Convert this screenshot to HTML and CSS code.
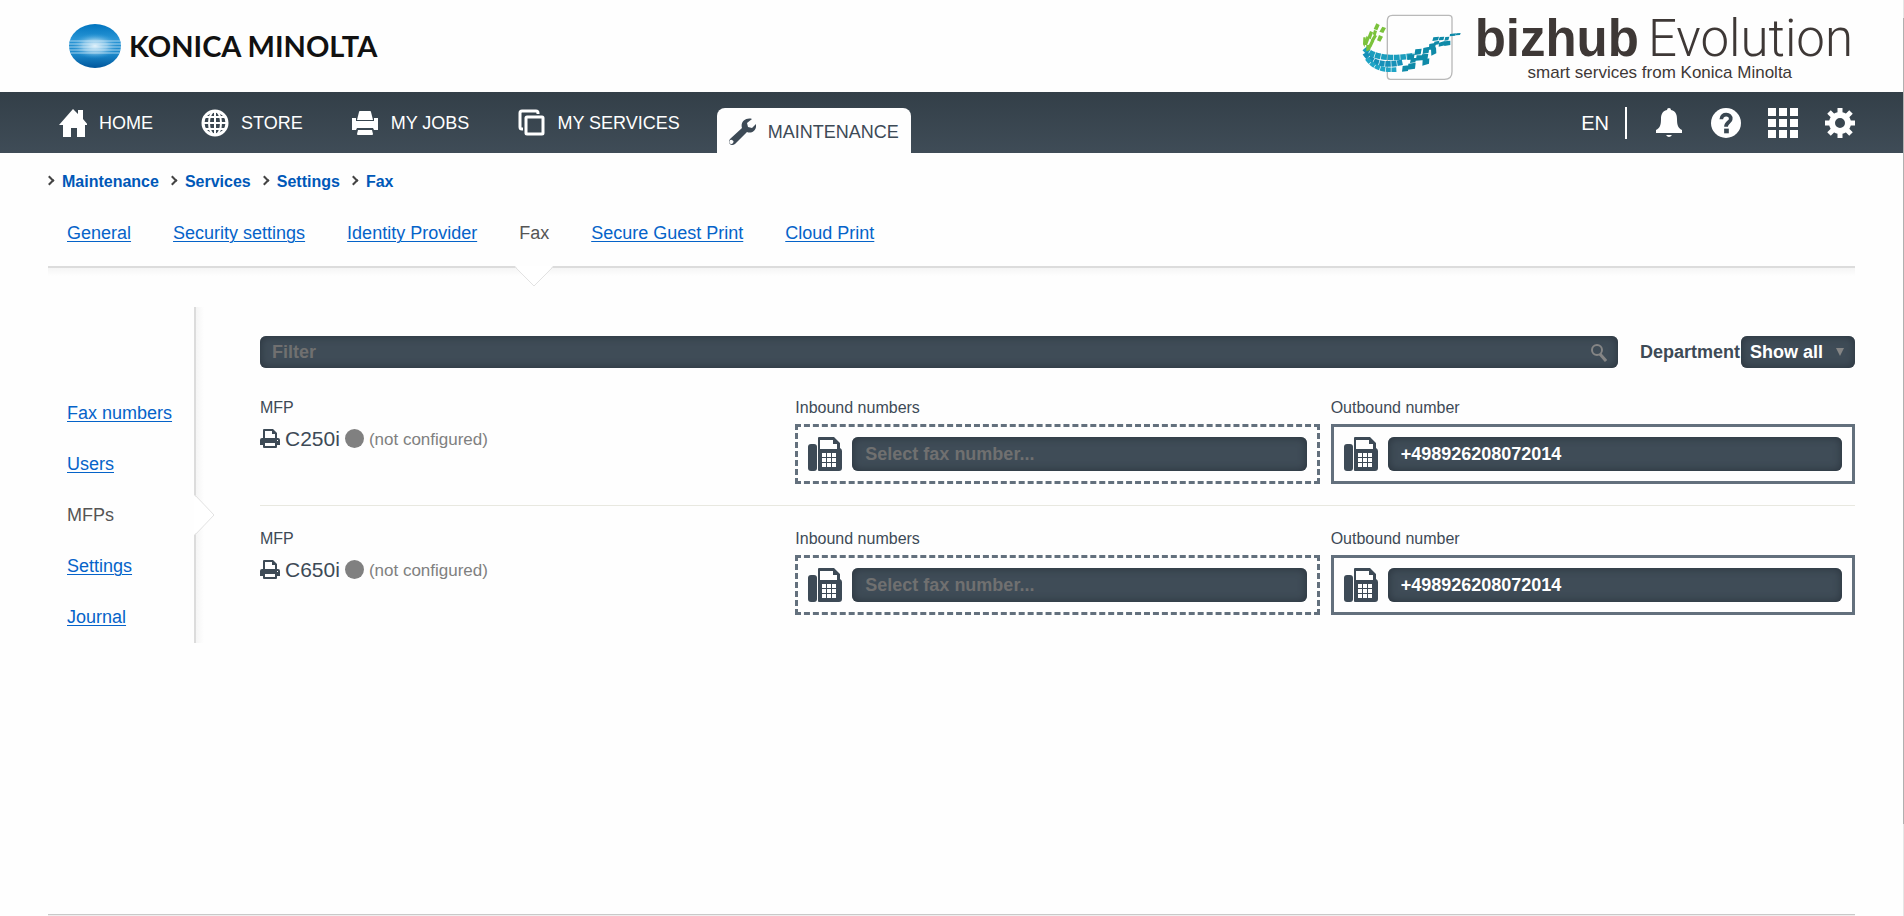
FILE: index.html
```html
<!DOCTYPE html>
<html lang="en">
<head>
<meta charset="utf-8">
<title>Fax - MFPs</title>
<link rel="stylesheet" href="styles.css">
</head>
<body>
<svg class="defs" aria-hidden="true">
  <defs>
    <symbol id="i-fax" viewBox="0 0 34 34">
      <rect x="0" y="7" width="9" height="27" rx="3"/>
      <path fill-rule="evenodd" d="M10 1q0-1 1-1h15l6 6v5q2 1 2 3v17q0 3-3 3H11q-1 0-1-1zM12 3v9h17V7h-4V3z"/>
      <g class="cut"><path d="M14 16h4v4h-4zM19 16h4v4h-4zM24 16h4v4h-4zM14 21h4v4h-4zM19 21h4v4h-4zM24 21h4v4h-4zM14 26h4v4h-4zM19 26h4v4h-4zM24 26h4v4h-4z"/></g>
    </symbol>
    <symbol id="i-mfp" viewBox="0 0 20 20">
      <path fill-rule="evenodd" d="M3 1q0-1 1-1h9l4 4v5h1q2 0 2 2v5h-3v2q0 1-1 1H4q-1 0-1-1v-2H0v-5q0-2 2-2h1zM5 2v7h10V5h-3V2zM5 14v3h10v-3zM17 11v1h1v-1z"/>
    </symbol>
    <symbol id="i-printer" viewBox="0 0 28 28">
      <path d="M9 2h10q1 0 1 1l2 8H6l2-8q0-1 1-1z"/>
      <path d="M1 9h4v3h18V9h4v12h-4l-1-2H6l-1 2H1z"/>
      <path d="M7 21h14l1 4q0 1-1 1H7q-1 0-1-1z"/>
    </symbol>
  </defs>
</svg>

<header class="brand-bar">
  <a class="brand" href="#" aria-label="Konica Minolta">
    <svg class="globe" viewBox="0 0 52 44" aria-hidden="true">
      <defs>
        <linearGradient id="gb" x1="0" y1="0" x2="0" y2="1"><stop offset="0" stop-color="#0074bf"/><stop offset=".35" stop-color="#2a96d6"/><stop offset=".7" stop-color="#1a86c8"/><stop offset="1" stop-color="#00569c"/></linearGradient>
        <radialGradient id="gg"><stop offset="0" stop-color="#e6f4fc"/><stop offset=".5" stop-color="#a5d4ef" stop-opacity=".7"/><stop offset="1" stop-color="#2a96d6" stop-opacity="0"/></radialGradient>
      </defs>
      <ellipse cx="26" cy="22" rx="26" ry="22" fill="url(#gb)"/>
      <ellipse cx="26" cy="22" rx="24" ry="13" fill="url(#gg)"/>
      <path d="M1 17h50M0 20h52M0 23h52M0 26h52M2 29h48" stroke="#d8eefa" stroke-opacity=".7"/>
    </svg>
    <span class="brand-name">KONICA MINOLTA</span>
  </a>
  <a class="product" href="#" aria-label="bizhub Evolution">
    <svg class="swirl" viewBox="0 0 330 240" aria-hidden="true">
      <path d="M118 31H288Q297 31 297 40V200Q297 223 274 223H112Q103 223 103 214V48Q103 31 118 31Z" fill="none" stroke="#b9b9b9" stroke-width="4"/>
      <g fill="none">
        <path d="M35 130C60 160 120 162 182 152" stroke="#1b9dbd" stroke-width="17" stroke-dasharray="17 2"/>
        <path d="M36 144C58 178 100 182 148 172" stroke="#1690b8" stroke-width="17" stroke-dasharray="16 2"/>
        <path d="M42 160C64 190 90 196 130 194" stroke="#20a5c6" stroke-width="14" stroke-dasharray="15 2"/>
      </g>
      <g fill="#0f8aa8">
        <path d="M166 149l19-2-3 16-19 2zM187 133l19-2-3 17-19 2zM191 151l18-1-3 16-18 1zM207 148l19-2-3 18-19 2zM211 129l18-4-2 18-18 4zM229 117l20-4-3 18-19 4zM234 133l15-6 1 18-15 7zM209 166l20-6-1 16-20 6zM174 160l16-2-3 14-16 2zM166 176l22-3-2 18-22 3zM149 183l18-2-2 17-18 2z"/>
        <path d="M241 97l17-2-3 11-17 2zM260 96l14-1-3 10-14 1zM277 96l12-1-3 11-12 1zM244 110l15-3-2 11-15 3zM258 113l17-5 1 13-19 4zM275 109l17-2 0 13-18 3zM291 87l18-2-2 7-17 2zM310 85l13-1-2 6-13 1z"/>
      </g>
      <g fill="#7bc23c">
        <path d="M70 55l10 5-7 16-11-4zM88 65l11 4-8 15-12-4zM63 75l9 3-4 14-9-4zM51 78l9 4-7 21-10-5zM78 90l12 5-8 15-10-4zM64 88l8 5-10 17-9-4zM41 92l8 10-7 19-10-2zM55 104l9 4-9 19-9-4zM40 121l18-4-7 18-11 4zM31 97l7 0-3 30-5-9z"/>
      </g>
    </svg>
    <span class="product-text">
      <span class="product-name"><b>bizhub</b><span class="product-light">Evolution</span></span>
      <span class="product-tag">smart services from Konica Minolta</span>
    </span>
  </a>
</header>

<nav class="main-nav" aria-label="Main">
  <a class="nav-item" href="#">
    <svg viewBox="0 0 28 28" aria-hidden="true"><path d="M14 0l5 5V1h5v9l5 6h-3v12h-8v-9h-6v9H4V16H0z"/></svg>HOME</a>
  <a class="nav-item" href="#">
    <svg viewBox="0 0 28 28" aria-hidden="true"><g fill="none" stroke="#fff" stroke-width="2"><circle cx="14" cy="14" r="12" stroke-width="3"/><ellipse cx="14" cy="14" rx="6" ry="12"/><path d="M14 2v24M2 14h24M4 8h20M4 20h20"/></g></svg>STORE</a>
  <a class="nav-item" href="#"><svg aria-hidden="true"><use href="#i-printer"/></svg>MY JOBS</a>
  <a class="nav-item" href="#">
    <svg viewBox="0 0 28 28" aria-hidden="true"><g fill="none" stroke="#fff" stroke-width="3"><path d="M6 20H5q-2 0-2-2V4q0-2 2-2h14q2 0 2 2v1"/><rect x="9" y="8" width="17" height="17" rx="1"/></g></svg>MY SERVICES</a>
  <a class="nav-item active" href="#" aria-current="page">
    <svg viewBox="0 0 28 28" aria-hidden="true"><path fill-rule="evenodd" d="M24 1L19 5l1 4 4 1 4-4c1 6-4 10-9 8L7 26c-4 3-8-1-5-5L14 10C12 4 18-1 24 1zM4 22a2 2 0 1 0 1 3 2 2 0 0 0-1-3z"/></svg>MAINTENANCE</a>
  <div class="tools">
    <button class="lang" type="button">EN</button>
    <button class="tool" type="button" aria-label="Notifications"><svg viewBox="0 0 30 30"><path d="M15 0q2 0 2 2c5 1 6 5 6 9 0 6 1 9 5 11v3H2v-3c4-2 5-5 5-11 0-4 1-8 6-9q0-2 2-2zM12 27h6q-3 4-6 0z"/></svg></button>
    <button class="tool" type="button" aria-label="Help"><svg viewBox="0 0 32 32"><circle cx="16" cy="16" r="16"/><path d="M11 12c0-7 11-6 10 0 0 3-5 3-5 8" fill="none" stroke="#3a4751" stroke-width="4"/><path d="M14 22h5v5h-5z" fill="#3a4751"/></svg></button>
    <button class="tool" type="button" aria-label="Applications"><svg viewBox="0 0 30 30"><path d="M0 0h8v8H0zM11 0h8v8h-8zM22 0h8v8h-8zM0 11h8v8H0zM11 11h8v8h-8zM22 11h8v8h-8zM0 22h8v8H0zM11 22h8v8h-8zM22 22h8v8h-8z"/></svg></button>
    <button class="tool" type="button" aria-label="Settings"><svg viewBox="0 0 30 30"><g fill="none" stroke="#fff"><circle cx="15" cy="15" r="8" stroke-width="6"/><path d="M15 0v6M15 24v6M0 15h6M24 15h6M4 4l5 5M21 21l5 5M26 4l-5 5M9 21l-5 5" stroke-width="5"/></g></svg></button>
  </div>
</nav>

<main class="page">
  <nav class="crumbs" aria-label="Breadcrumb">
    <a href="#">Maintenance</a><a href="#">Services</a><a href="#">Settings</a><a href="#">Fax</a>
  </nav>
  <nav class="tabs" aria-label="Settings">
    <a href="#">General</a><a href="#">Security settings</a><a href="#">Identity Provider</a>
    <span class="tab-current">Fax<svg class="arrow-down" viewBox="0 0 38 21" aria-hidden="true"><path d="M0 0H38L19 20z" fill="#fff"/><path d="M0 1L19 20 38 1" fill="none" stroke="#e2e2e2"/></svg></span>
    <a href="#">Secure Guest Print</a><a href="#">Cloud Print</a>
  </nav>
  <div class="columns">
    <nav class="side" aria-label="Fax">
      <a href="#">Fax numbers</a>
      <a href="#">Users</a>
      <span class="side-current">MFPs<svg class="arrow-right" viewBox="0 0 21 40" aria-hidden="true"><path d="M0 0V40L20 20z" fill="#fff"/><path d="M1 0L20 20 1 40" fill="none" stroke="#e2e2e2"/></svg></span>
      <a href="#">Settings</a>
      <a href="#">Journal</a>
    </nav>
    <section class="content">
      <form class="filter-row">
        <div class="filter-box">
          <input class="dark" type="text" placeholder="Filter" aria-label="Filter">
          <svg class="search" viewBox="0 0 16 18" aria-hidden="true"><circle cx="6" cy="6" r="5" fill="none" stroke="#858585" stroke-width="2"/><path d="M9 10l6 7" stroke="#858585" stroke-width="3"/></svg>
        </div>
        <label class="dept" for="dept">Department</label>
        <div class="select-box">
          <select class="dark" id="dept"><option>Show all</option></select>
          <svg class="caret" viewBox="0 0 8 8" aria-hidden="true"><path d="M0 0h8L4 8z"/></svg>
        </div>
      </form>

      <div class="mfp">
        <div>
          <div class="label">MFP</div>
          <div class="device"><svg class="mfp-icon" aria-hidden="true"><use href="#i-mfp"/></svg>C250i<span class="dot"></span><span class="state">(not configured)</span></div>
        </div>
        <div>
          <label class="label" for="in1">Inbound numbers</label>
          <div class="slot empty"><svg class="fax-icon" aria-hidden="true"><use href="#i-fax"/></svg><input class="dark" id="in1" type="text" placeholder="Select fax number..."></div>
        </div>
        <div>
          <label class="label" for="out1">Outbound number</label>
          <div class="slot"><svg class="fax-icon" aria-hidden="true"><use href="#i-fax"/></svg><input class="dark" id="out1" type="text" value="+498926208072014"></div>
        </div>
      </div>

      <div class="mfp">
        <div>
          <div class="label">MFP</div>
          <div class="device"><svg class="mfp-icon" aria-hidden="true"><use href="#i-mfp"/></svg>C650i<span class="dot"></span><span class="state">(not configured)</span></div>
        </div>
        <div>
          <label class="label" for="in2">Inbound numbers</label>
          <div class="slot empty"><svg class="fax-icon" aria-hidden="true"><use href="#i-fax"/></svg><input class="dark" id="in2" type="text" placeholder="Select fax number..."></div>
        </div>
        <div>
          <label class="label" for="out2">Outbound number</label>
          <div class="slot"><svg class="fax-icon" aria-hidden="true"><use href="#i-fax"/></svg><input class="dark" id="out2" type="text" value="+498926208072014"></div>
        </div>
      </div>
    </section>
  </div>
</main>
<footer class="foot"></footer>
<div class="scroll-edge" aria-hidden="true"></div>
</body>
</html>
```

FILE: styles.css
```css
* { box-sizing: border-box; }

body {
  margin: 0;
  padding-right: 1px;
  min-height: 100vh;
  display: flex;
  flex-direction: column;
  background: #fefefe;
  color: #3d4a56;
  font-family: "Liberation Sans", Arial, sans-serif;
  font-size: 18px;
  line-height: 20px;
}

a { color: #0563c9; }
button, input, select { font: inherit; }
.defs { position: absolute; width: 0; height: 0; }

/* Brand bar */
.brand-bar {
  display: flex;
  justify-content: space-between;
  height: 92px;
  padding: 0 50px 0 69px;
}
.brand { display: flex; align-items: center; gap: 8px; color: #111; text-decoration: none; }
.globe { width: 52px; height: 44px; }
.brand-name { font: 700 29px/44px Lato, sans-serif; }
.product { display: flex; align-items: flex-start; gap: 12px; padding-top: 5px; color: #3e3836; text-decoration: none; }
.swirl { width: 110px; height: 80px; }
.product-text { display: flex; flex-direction: column; align-items: center; padding-top: 8px; }
.product-name { display: flex; gap: 9px; font-size: 51px; line-height: 52px; }
.product-light { font-family: Roboto, sans-serif; font-weight: 300; }
.product-tag { padding-right: 8px; font-size: 17px; line-height: 16px; }

/* Main navigation */
.main-nav {
  display: flex;
  align-items: flex-end;
  height: 61px;
  padding: 0 48px;
  background: linear-gradient(#333f48, #3f4c57);
}
.nav-item {
  display: flex;
  align-items: center;
  gap: 12px;
  height: 60px;
  margin-right: 37px;
  padding: 0 0 0 11px;
  color: #fff;
  text-decoration: none;
}
.nav-item svg { width: 28px; height: 28px; fill: #fff; }
.nav-item.active {
  height: 45px;
  margin: 0;
  padding: 2px 12px 0 11px;
  border-radius: 8px 8px 0 0;
  background: #fefefe;
  color: #3d4a56;
}
.nav-item.active svg { fill: #3d4a56; }
.tools { display: flex; align-items: center; gap: 27px; height: 60px; margin-left: auto; }
.tools button { border: 0; padding: 0; background: none; color: #fff; }
.tools .lang { height: 32px; padding-right: 16px; border-right: 2px solid #fff; font-size: 20px; }
.tool svg { display: block; width: 30px; height: 30px; fill: #fff; }

/* Breadcrumb and tabs */
.page { flex: 1; padding: 0 48px; }
.crumbs { display: flex; gap: 12px; padding-top: 19px; font-size: 16px; font-weight: 700; }
.crumbs a { display: flex; align-items: center; color: #0058b8; text-decoration: none; }
.crumbs a::before {
  content: "";
  width: 5px;
  height: 5px;
  margin: 0 9px 4px -2px;
  border: solid #444;
  border-width: 2px 2px 0 0;
  transform: rotate(45deg);
}
.tabs {
  display: flex;
  gap: 42px;
  padding: 31px 19px 23px;
  border-bottom: 2px solid #dcdcdc;
}
.tabs a, .side a { text-underline-offset: 2px; text-decoration-thickness: 1px; }
.tab-current, .side-current { position: relative; color: #555; }
.arrow-down { position: absolute; top: 43px; left: 50%; width: 38px; height: 21px; margin-left: -19px; }

/* Side navigation */
.columns {
  display: flex;
  align-items: flex-start;
  padding-top: 39px;
  background: linear-gradient(#f5f5f5, #fefefe 8px);
}
.side {
  position: relative;
  display: flex;
  flex-direction: column;
  gap: 31px;
  width: 148px;
  height: 336px;
  padding: 96px 0 0 19px;
  border-right: 2px solid #dcdcdc;
}
.side::after {
  content: "";
  position: absolute;
  top: 0;
  right: -10px;
  width: 8px;
  height: 100%;
  background: linear-gradient(90deg, #f5f5f5, #fefefe);
}
.side-current { z-index: 1; }
.arrow-right { position: absolute; top: -10px; right: -21px; width: 21px; height: 40px; }

/* Filter */
.content { flex: 1; min-width: 0; padding: 29px 0 0 64px; }
.dark {
  height: 34px;
  border: 0;
  border-radius: 6px;
  background: #3f4c57;
  box-shadow: inset 0 0 8px #28323b;
  color: #fff;
  font-weight: 700;
}
.dark::placeholder { color: #707070; opacity: 1; }
.filter-row { display: flex; align-items: center; }
.filter-box { position: relative; flex: 1; }
.filter-box .dark { display: block; width: 100%; height: 32px; padding: 0 40px 0 12px; }
.search { position: absolute; top: 8px; right: 11px; width: 16px; height: 18px; }
.dept { padding-left: 22px; font-weight: 700; }
.select-box { position: relative; width: 114px; margin-left: 1px; }
.select-box .dark { display: block; width: 100%; height: 32px; padding: 0 9px; appearance: none; }
.caret { position: absolute; top: 12px; right: 11px; width: 8px; height: 8px; fill: #858585; }

/* Devices */
.mfp {
  display: grid;
  grid-template-columns: repeat(3, 1fr);
  gap: 11px;
  padding: 30px 0 21px;
}
.mfp + .mfp { padding-top: 23px; border-top: 1px solid #e8e8e0; }
.label { display: block; padding-bottom: 6px; font-size: 16px; }
.device { display: flex; align-items: center; gap: 5px; height: 20px; padding-top: 9px; font-size: 21px; }
.mfp-icon { width: 20px; height: 20px; fill: #3d4a56; }
.dot { width: 19px; height: 19px; border-radius: 50%; background: #808080; }
.state { padding-top: 2px; color: #808080; font-size: 17px; }
.slot {
  display: flex;
  align-items: center;
  gap: 10px;
  height: 60px;
  padding: 0 10px;
  border: 3px solid #63707d;
}
.slot.empty { border-style: dashed; }
.fax-icon { flex: none; width: 34px; height: 34px; fill: #3d4a56; }
.cut { fill: #fff; }
.slot .dark { flex: 1; min-width: 0; padding: 0 13px; }

.foot { height: 2px; border-top: 1px solid #c9c9c9; margin: 0 48px; background: #eee; }
.scroll-edge {
  position: absolute;
  top: 0;
  right: 0;
  width: 1px;
  height: 100%;
  background: linear-gradient(#e6e6e6 2%, #b0b0b0 2%, #b0b0b0 90%, #e6e6e6 90%);
}
```
